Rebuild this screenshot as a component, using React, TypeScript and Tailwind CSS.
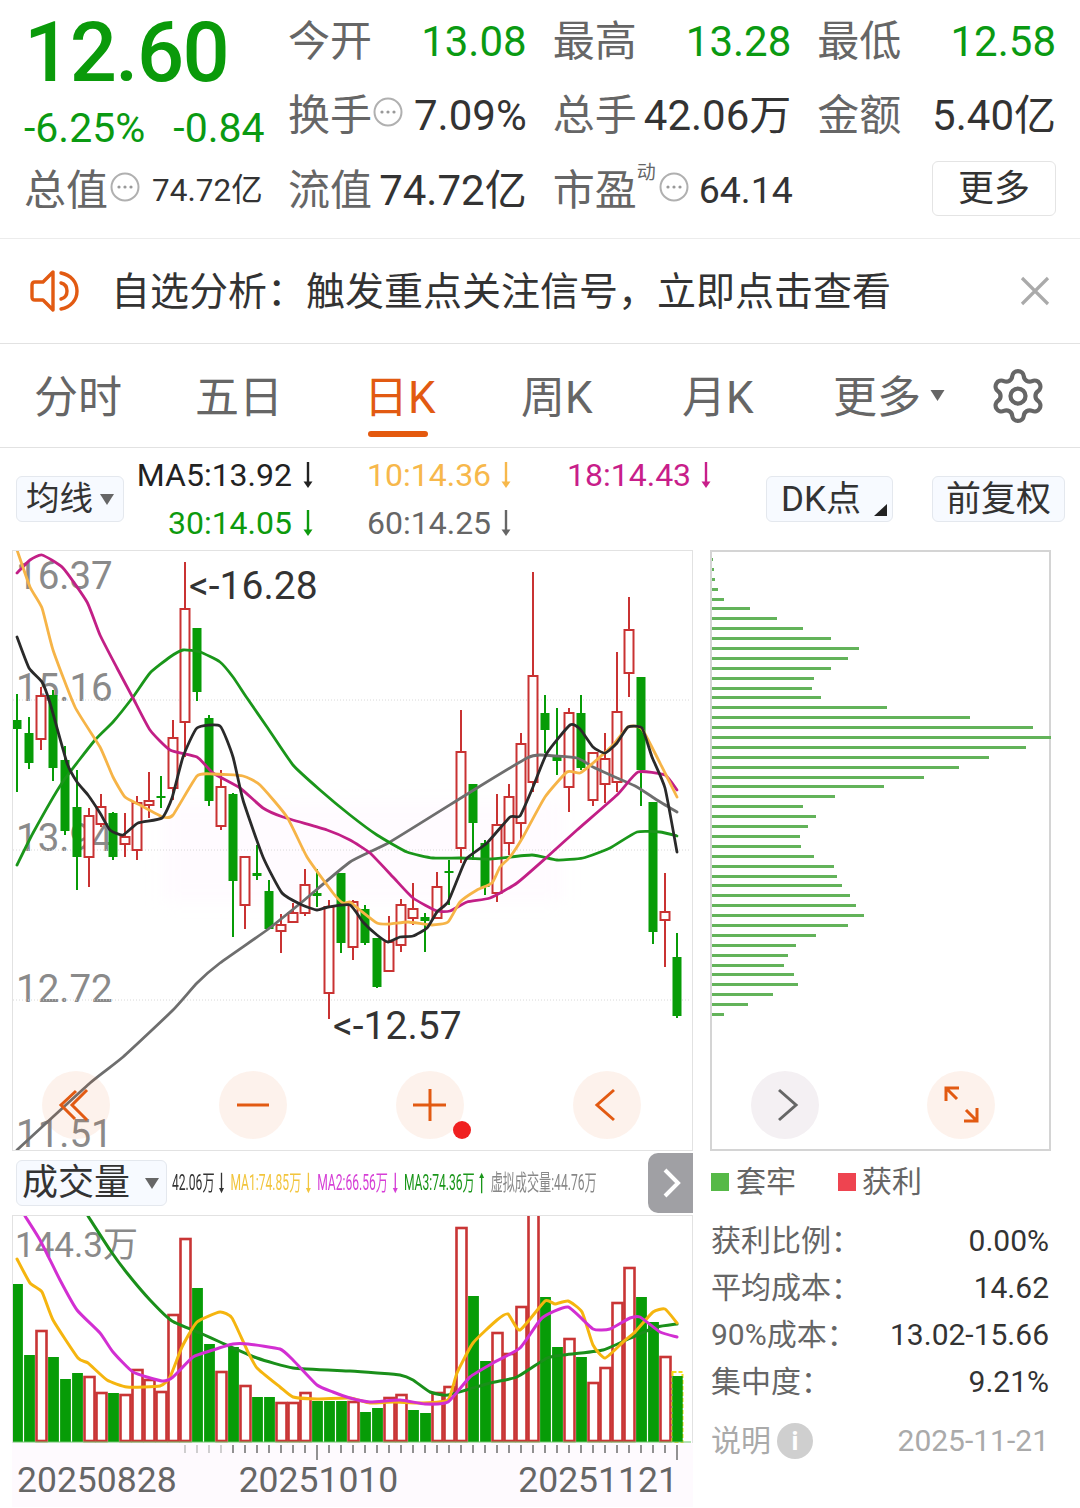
import React from 'react';
import { Settings } from 'lucide-react';

type Candle = [string, number, number, number, number];
type Pt = [number, number];

// color, high, body top, body bottom, low
const CANDLES: Candle[] = [
  ['g', 694, 720, 729, 792], ['g', 717, 733, 763, 769], ['r', 687, 696, 739, 750], ['g', 690, 695, 768, 781],
  ['g', 746, 760, 831, 835], ['g', 770, 807, 857, 890], ['r', 808, 816, 857, 887], ['r', 794, 807, 824, 827],
  ['g', 812, 813, 857, 860], ['r', 813, 837, 844, 857], ['r', 796, 803, 850, 860], ['r', 772, 801, 805, 818],
  ['g', 776, 796, 798, 808], ['r', 720, 738, 788, 800], ['r', 562, 609, 722, 757], ['g', 628, 628, 692, 701],
  ['g', 715, 718, 801, 806], ['r', 770, 787, 826, 830], ['g', 793, 794, 881, 937], ['r', 857, 857, 905, 929],
  ['g', 845, 873, 876, 880], ['g', 880, 891, 929, 929], ['r', 914, 925, 931, 953], ['r', 903, 913, 922, 922],
  ['r', 869, 885, 913, 916], ['g', 869, 893, 896, 907], ['r', 900, 907, 993, 1019], ['g', 873, 873, 943, 953],
  ['r', 900, 902, 947, 960], ['g', 905, 909, 943, 945], ['g', 938, 938, 987, 988], ['r', 916, 942, 971, 971],
  ['r', 899, 905, 945, 952], ['r', 883, 909, 918, 925], ['g', 913, 917, 921, 952], ['r', 872, 887, 918, 918],
  ['g', 860, 871, 873, 905], ['r', 710, 752, 848, 863], ['g', 784, 784, 823, 860], ['g', 840, 843, 887, 895],
  ['r', 794, 825, 893, 902], ['r', 784, 797, 843, 855], ['r', 733, 744, 823, 840], ['r', 572, 676, 782, 792],
  ['g', 695, 713, 730, 753], ['g', 708, 755, 761, 775], ['r', 708, 713, 787, 812], ['g', 695, 713, 768, 770],
  ['r', 753, 753, 800, 806], ['r', 733, 759, 784, 803], ['r', 652, 712, 782, 792], ['r', 597, 630, 673, 697],
  ['g', 677, 677, 770, 806], ['g', 802, 802, 932, 944], ['r', 873, 912, 920, 967], ['g', 933, 957, 1016, 1018],
];

const MA5: Pt[] = [[17, 637], [29, 668], [42, 682], [50, 703], [67, 763], [77, 782], [88, 795], [100, 813], [110, 830], [123, 835], [138, 823], [162, 818], [172, 798], [183, 757], [197, 728], [220, 726], [233, 757], [243, 800], [263, 857], [282, 893], [302, 905], [317, 910], [328, 907], [350, 905], [363, 922], [377, 935], [388, 942], [400, 937], [413, 936], [427, 928], [437, 912], [448, 902], [460, 873], [467, 858], [487, 843], [510, 817], [520, 816], [533, 787], [547, 753], [570, 725], [580, 729], [593, 747], [605, 753], [617, 743], [628, 727], [642, 728], [652, 757], [665, 788], [677, 852]];
const MA10: Pt[] = [[17, 550], [30, 587], [42, 608], [53, 650], [75, 707], [100, 747], [113, 777], [125, 797], [140, 805], [163, 817], [173, 815], [197, 776], [213, 774], [243, 776], [260, 785], [287, 817], [307, 857], [333, 893], [343, 903], [350, 902], [360, 910], [377, 923], [390, 924], [408, 922], [432, 925], [448, 922], [460, 902], [477, 890], [492, 883], [500, 867], [510, 857], [523, 837], [545, 797], [567, 772], [580, 773], [593, 763], [613, 745], [628, 727], [642, 729], [665, 773], [677, 797]];
const MA18: Pt[] = [[17, 573], [30, 560], [42, 555], [63, 568], [87, 602], [100, 635], [117, 668], [133, 698], [150, 730], [170, 750], [197, 757], [213, 773], [240, 788], [263, 808], [283, 817], [327, 830], [350, 840], [370, 853], [393, 877], [413, 898], [437, 911], [450, 911], [467, 902], [490, 898], [517, 883], [547, 857], [577, 830], [617, 795], [638, 772], [665, 775], [677, 790]];
const MA30: Pt[] = [[17, 865], [33, 833], [62, 783], [95, 740], [113, 722], [133, 697], [150, 673], [170, 657], [183, 650], [200, 652], [220, 662], [233, 677], [247, 698], [267, 727], [293, 765], [320, 790], [350, 815], [377, 835], [407, 852], [433, 858], [460, 858], [490, 859], [532, 855], [557, 860], [583, 858], [610, 848], [637, 832], [660, 832], [677, 836]];
const MA60: Pt[] = [[17, 1150], [90, 1083], [123, 1057], [173, 1010], [197, 983], [220, 963], [267, 930], [302, 902], [350, 862], [390, 842], [477, 788], [527, 758], [540, 755], [577, 758], [593, 767], [617, 778], [637, 787], [657, 800], [677, 812]];

const VOLUME: [string, number][] = [
  ['g', 1284], ['g', 1355], ['r', 1331], ['g', 1357], ['g', 1379], ['g', 1373], ['r', 1377], ['r', 1393], ['g', 1393], ['r', 1395],
  ['r', 1370], ['r', 1380], ['r', 1392], ['r', 1315], ['r', 1239], ['g', 1288], ['g', 1344], ['r', 1372], ['g', 1347], ['r', 1386],
  ['g', 1397], ['g', 1397], ['r', 1403], ['r', 1403], ['r', 1393], ['g', 1401], ['g', 1401], ['g', 1401], ['r', 1402], ['g', 1412],
  ['g', 1408], ['r', 1398], ['r', 1395], ['g', 1410], ['g', 1413], ['r', 1393], ['r', 1387], ['r', 1228], ['g', 1296], ['g', 1361],
  ['r', 1333], ['r', 1354], ['r', 1307], ['r', 1205], ['g', 1297], ['g', 1347], ['r', 1339], ['g', 1357], ['r', 1383], ['r', 1368],
  ['r', 1303], ['r', 1268], ['g', 1297], ['g', 1322], ['r', 1357], ['g', 1376],
];

const VOL1: Pt[] = [[17, 1259], [30, 1283], [42, 1292], [53, 1320], [78, 1358], [88, 1363], [107, 1380], [127, 1387], [160, 1386], [170, 1377], [182, 1347], [197, 1322], [220, 1312], [232, 1318], [247, 1350], [257, 1368], [280, 1387], [293, 1397], [317, 1399], [350, 1398], [370, 1403], [393, 1402], [422, 1403], [448, 1400], [457, 1373], [473, 1343], [497, 1320], [508, 1314], [520, 1330], [545, 1301], [555, 1304], [568, 1301], [582, 1312], [593, 1345], [605, 1358], [623, 1342], [635, 1332], [653, 1312], [665, 1309], [677, 1323]];
const VOL2: Pt[] = [[25, 1216], [40, 1240], [60, 1280], [77, 1310], [100, 1333], [113, 1352], [133, 1372], [162, 1381], [173, 1377], [193, 1357], [213, 1350], [233, 1344], [248, 1344], [280, 1349], [293, 1360], [317, 1385], [333, 1392], [350, 1398], [370, 1402], [400, 1400], [425, 1404], [448, 1402], [470, 1377], [493, 1363], [520, 1348], [542, 1318], [568, 1307], [593, 1329], [610, 1329], [630, 1318], [640, 1317], [660, 1332], [677, 1337]];
const VOL3: Pt[] = [[88, 1216], [110, 1250], [127, 1273], [150, 1300], [172, 1321], [200, 1333], [220, 1342], [257, 1358], [293, 1368], [350, 1371], [377, 1373], [400, 1375], [413, 1380], [430, 1392], [448, 1395], [490, 1383], [517, 1377], [547, 1358], [563, 1355], [603, 1350], [637, 1335], [657, 1327], [677, 1324]];

const PROFILE = [1, 2, 3, 6, 12, 38, 65, 91, 119, 147, 136, 119, 102, 100, 109, 175, 258, 321, 339, 314, 277, 247, 212, 172, 123, 91, 104, 96, 88, 89, 102, 122, 125, 130, 138, 144, 152, 136, 104, 84, 76, 72, 82, 86, 61, 36, 12];

const TABS = [
  { label: '分时', width: 'w-[161px]' },
  { label: '五日', width: 'w-[169px]' },
  { label: '日K', width: 'w-[157px]', active: true },
  { label: '周K', width: 'w-[161px]' },
  { label: '月K', width: 'w-[151px]' },
];

const COST_ROWS = [
  ['获利比例：', '0.00%'],
  ['平均成本：', '14.62'],
  ['90%成本：', '13.02-15.66'],
  ['集中度：', '9.21%'],
];

// rounded line through the points, low tension so flat stretches stay flat
const toPath = (pts: Pt[]) => {
  let d = `M${pts[0][0]} ${pts[0][1]}`;
  for (let i = 0; i < pts.length - 1; i++) {
    const p0 = pts[i - 1] ?? pts[i];
    const p1 = pts[i];
    const p2 = pts[i + 1];
    const p3 = pts[i + 2] ?? p2;
    const c1x = p1[0] + (p2[0] - p0[0]) / 12;
    const c1y = p1[1] + (p2[1] - p0[1]) / 12;
    const c2x = p2[0] - (p3[0] - p1[0]) / 12;
    const c2y = p2[1] - (p3[1] - p1[1]) / 12;
    d += `C${c1x} ${c1y} ${c2x} ${c2y} ${p2[0]} ${p2[1]}`;
  }
  return d;
};

const Dots: React.FC = () => (
  <svg width="30" height="30" viewBox="0 0 30 30" className="mb-[8px] shrink-0">
    <circle cx="15" cy="15" r="13.5" fill="none" stroke="#b0b0b0" strokeWidth="2" />
    <circle cx="9" cy="15" r="1.6" fill="#999" />
    <circle cx="15" cy="15" r="1.6" fill="#999" />
    <circle cx="21" cy="15" r="1.6" fill="#999" />
  </svg>
);

const Arrow: React.FC<{ color: string; up?: boolean; small?: boolean }> = ({ color, up, small }) => (
  <svg
    width="14"
    height={small ? 22 : 28}
    viewBox="0 0 14 28"
    preserveAspectRatio="none"
    className={`shrink-0 ${up ? 'rotate-180' : ''}`}
  >
    <path d="M7 1V24" stroke={color} strokeWidth="2.4" fill="none" />
    <path d="M2.5 20.5H11.5L7 27Z" fill={color} />
  </svg>
);

const Triangle: React.FC<{ className: string }> = ({ className }) => (
  <svg viewBox="0 0 14 11" className={className}>
    <path d="M0 0H14L7 11Z" fill="#666" />
  </svg>
);

const RoundButton: React.FC<{ tone?: string; children: React.ReactNode }> = ({ tone, children }) => (
  <div className={`flex h-[68px] w-[68px] items-center justify-center rounded-full ${tone ?? 'bg-[#e25a12]/[0.08]'}`}>
    <svg width="68" height="68" viewBox="0 0 68 68" fill="none" strokeWidth="3" stroke="#e25a12">
      {children}
    </svg>
  </div>
);

const Stat: React.FC<{ label: string; value: string; green?: boolean; dots?: boolean }> = ({ label, value, green, dots }) => (
  <div className="flex items-center justify-between">
    <div className="flex items-center gap-[1px]">
      <span className="text-[#666]">{label}</span>
      {dots && <Dots />}
    </div>
    <span className={green ? 'text-[#0a9a12]' : 'text-[#333]'}>{value}</span>
  </div>
);

const PriceChart: React.FC = () => (
  <div className="relative h-[601px] border border-[#e2e2e2]">
    {/* faint watermark behind the candles */}
    <div className="absolute left-[150px] top-[250px] h-[100px] w-[400px] bg-[#fffbff] blur-sm" />
    <span className="absolute left-[3px] top-[3px] text-[38.5px] leading-[44px] text-[#8a8a8a]">16.37</span>
    <span className="absolute left-[3px] top-[115px] text-[38.5px] leading-[44px] text-[#8a8a8a]">15.16</span>
    <span className="absolute left-[3px] top-[265px] text-[38.5px] leading-[44px] text-[#8a8a8a]">13.94</span>
    <span className="absolute left-[3px] top-[416px] text-[38.5px] leading-[44px] text-[#8a8a8a]">12.72</span>
    <span className="absolute left-[3px] top-[561px] text-[38.5px] leading-[44px] text-[#8a8a8a]">11.51</span>
    <svg viewBox="13 551 678 599" className="relative z-10 block h-[599px] w-[678px]">
      {[700, 850, 1000].map((y) => (
        <line key={y} x1="13" x2="691" y1={y} y2={y} stroke="#d8d8d8" strokeWidth="1" strokeDasharray="1 2" />
      ))}
      {CANDLES.map(([color, high, top, bottom, low], i) => {
        const x = 17 + 12 * i;
        const stroke = color === 'g' ? '#079c07' : '#c93232';
        return (
          <g key={i}>
            <line x1={x} x2={x} y1={high} y2={low} stroke={stroke} strokeWidth="2" />
            {color === 'g' ? (
              <rect x={x - 4.5} y={top} width="9" height={bottom - top} fill={stroke} />
            ) : (
              <rect x={x - 4.5} y={top} width="9" height={bottom - top} fill="#fff" stroke={stroke} strokeWidth="2" />
            )}
          </g>
        );
      })}
      <g fill="none" strokeWidth="2.8" strokeLinejoin="round" strokeLinecap="round">
        <path d={toPath(MA60)} stroke="#6e6e6e" />
        <path d={toPath(MA30)} stroke="#1a961a" />
        <path d={toPath(MA18)} stroke="#c21f86" />
        <path d={toPath(MA10)} stroke="#f6b447" />
        <path d={toPath(MA5)} stroke="#2a2a2a" />
      </g>
    </svg>
    <span className="absolute left-[176px] top-[13px] z-10 text-[39px] leading-[44px] text-[#333]">{'<-16.28'}</span>
    <span className="absolute left-[320px] top-[453px] z-10 text-[39px] leading-[44px] text-[#333]">{'<-12.57'}</span>
    <div className="absolute left-[29px] top-[520px] z-20 flex gap-[109px]">
      <RoundButton>
        <path d="M34 20L19 34L33 48M45 19L30 34L45 49" />
      </RoundButton>
      <RoundButton>
        <path d="M18 34H50" />
      </RoundButton>
      <div className="relative">
        <RoundButton>
          <path d="M17 34H50M34 18V50" />
        </RoundButton>
        <div className="absolute left-[57px] top-[50px] h-[18px] w-[18px] rounded-full bg-[#f02020]" />
      </div>
      <RoundButton>
        <path d="M41 19L24 34L41 49" />
      </RoundButton>
    </div>
  </div>
);

const VolumeChart: React.FC = () => (
  <div className="relative h-[228px] border-x border-t border-[#e2e2e2]">
    <span className="absolute left-[2px] top-[8px] text-[35px] leading-[44px] text-[#8a8a8a]">144.3万</span>
    <svg viewBox="13 1216 678 227" className="relative z-10 block h-[227px] w-[678px]">
      {VOLUME.map(([color, top], i) => {
        const x = 17.5 + 12 * i;
        if (i === 55) {
          return (
            <g key={i}>
              <rect x={x - 5} y={1372} width="10" height="70" fill="none" stroke="#f2dc1a" strokeWidth="2" strokeDasharray="4 2" />
              <rect x={x - 5.2} y={top} width="10.4" height={1442 - top} fill="#079c07" />
            </g>
          );
        }
        return color === 'g' ? (
          <rect key={i} x={x - 5.4} y={top} width="10.8" height={1442 - top} fill="#079c07" />
        ) : (
          <rect key={i} x={x - 5} y={top} width="10" height={1441 - top} fill="#fff" stroke="#c93535" strokeWidth="2.6" />
        );
      })}
      <line x1="13" x2="691" y1="1442" y2="1442" stroke="#6cc46c" strokeWidth="1" />
      <g fill="none" strokeWidth="3" strokeLinejoin="round" strokeLinecap="round">
        <path d={toPath(VOL3)} stroke="#1a8f1a" />
        <path d={toPath(VOL1)} stroke="#f5b50f" />
        <path d={toPath(VOL2)} stroke="#d22fd2" />
      </g>
    </svg>
  </div>
);

export default function App() {
  return (
    <div className="h-[1508px] w-[1080px] overflow-hidden bg-white font-['Roboto','Noto_Sans_CJK_SC',sans-serif]">
      {/* quote header */}
      <div className="flex h-[239px] border-b border-[#ececec]">
        <div className="w-[288px] shrink-0 pl-[24px]">
          <div className="h-[98px] text-[83px] font-medium leading-[106px] tracking-[-1.5px] text-[#0a9a0a]">12.60</div>
          <div className="flex h-[60px] items-center gap-[28px] text-[41px] leading-none text-[#0a9a12]">
            <span>-6.25%</span>
            <span>-0.84</span>
          </div>
          <div className="flex h-[66px] items-center">
            <span className="text-[42px] leading-none text-[#666]">总值</span>
            <span className="ml-[2px] flex">
              <Dots />
            </span>
            <span className="ml-[12px] text-[31.5px] leading-none text-[#333]">74.72亿</span>
          </div>
        </div>
        <div className="w-[768px]">
          <div className="grid h-[228px] grid-cols-3 grid-rows-3 gap-x-[26px] pt-[5px] text-[42px] leading-none">
            <Stat label="今开" value="13.08" green />
            <Stat label="最高" value="13.28" green />
            <Stat label="最低" value="12.58" green />
            <Stat label="换手" value="7.09%" dots />
            <Stat label="总手" value="42.06万" />
            <Stat label="金额" value="5.40亿" />
            <Stat label="流值" value="74.72亿" />
            <div className="flex items-center whitespace-nowrap">
              <span className="shrink-0 text-[#666]">市盈</span>
              <span className="mb-[36px] shrink-0 text-[19px] text-[#666]">动</span>
              <span className="ml-[3px] flex">
                <Dots />
              </span>
              <span className="ml-[10px] text-[37.5px] text-[#333]">64.14</span>
            </div>
            <div className="flex items-center justify-end">
              <div className="mb-[4px] flex h-[55px] w-[124px] items-center justify-center rounded-[6px] border border-[#e4e4e4] text-[36px] text-[#333]">
                更多
              </div>
            </div>
          </div>
        </div>
      </div>

      {/* notice */}
      <div className="flex h-[105px] items-center border-b border-[#e2e2e2] pl-[30px]">
        <svg width="50" height="44" viewBox="0 0 50 44" fill="none" stroke="#e25a12" strokeWidth="3.4" strokeLinejoin="round" strokeLinecap="round">
          <path d="M5 13H13L23 3V41L13 31H5C3 31 2 30 2 28V16C2 14 3 13 5 13Z" />
          <path d="M31 4C41 6 47 13 47 22C47 31 41 38 31 40" />
          <path d="M31 14C35 15 37 18 37 22C37 26 35 29 31 30" />
        </svg>
        <span className="ml-[31px] mt-[3px] text-[39px] leading-none text-[#333]">自选分析：触发重点关注信号，立即点击查看</span>
        <svg width="30" height="30" viewBox="0 0 30 30" className="ml-auto mr-[30px]" stroke="#aaa" strokeWidth="3.2">
          <path d="M2 2L28 28M28 2L2 28" />
        </svg>
      </div>

      {/* period tabs */}
      <div className="flex h-[104px] items-center border-b border-[#e2e2e2] pl-[34px] pt-[5px] text-[44px] leading-none text-[#666]">
        {TABS.map((tab) => (
          <div key={tab.label} className={`relative shrink-0 ${tab.width} ${tab.active ? 'text-[#e25a12]' : ''}`}>
            {tab.label}
            {tab.active && <div className="absolute left-[4px] top-[55px] h-[6px] w-[60px] rounded-full bg-[#e4590e]" />}
          </div>
        ))}
        <div className="flex items-center gap-[9px]">
          <span>更多</span>
          <Triangle className="mt-[-6px] h-[11px] w-[15px]" />
        </div>
        <Settings size={60} strokeWidth={1.7} color="#666" className="ml-[43px] mt-[-4px]" />
      </div>

      {/* moving average legend */}
      <div className="flex h-[102px] items-center pl-[16px]">
        <div className="flex h-[46px] w-[108px] items-center justify-center gap-[7px] rounded-[6px] border border-[#e4e8ee] bg-[#f7faff] text-[33.5px] leading-none text-[#333]">
          <span>均线</span>
          <Triangle className="h-[11px] w-[14px]" />
        </div>
        <div className="ml-[13px] grid grid-cols-[178px_148px_145px] grid-rows-[48px_48px] gap-x-[52px] text-[32px] leading-none">
          <div className="flex items-center justify-end gap-[9px] text-[#222]">
            MA5:13.92
            <Arrow color="#222" />
          </div>
          <div className="flex items-center gap-[8px] text-[#f7b84b]">
            10:14.36
            <Arrow color="#f7b84b" />
          </div>
          <div className="flex items-center gap-[8px] text-[#c81e8a]">
            18:14.43
            <Arrow color="#c81e8a" />
          </div>
          <div className="flex items-center justify-end gap-[9px] text-[#0d9a0d]">
            30:14.05
            <Arrow color="#0d9a0d" />
          </div>
          <div className="flex items-center gap-[8px] text-[#666]">
            60:14.25
            <Arrow color="#666" />
          </div>
        </div>
        <div className="relative ml-[54px] flex h-[46px] w-[127px] items-center rounded-[6px] border border-[#e4e8ee] bg-[#f7faff] pl-[14px] text-[35px] leading-none text-[#333]">
          DK点
          <svg width="13" height="12" viewBox="0 0 13 12" className="absolute bottom-[5px] right-[5px]">
            <path d="M13 0V12H0Z" fill="#222" />
          </svg>
        </div>
        <div className="ml-[39px] flex h-[46px] w-[133px] items-center justify-center rounded-[6px] border border-[#e4e8ee] bg-[#f7faff] text-[35px] leading-none text-[#333]">
          前复权
        </div>
      </div>

      {/* charts */}
      <div className="flex pl-[12px]">
        <div className="w-[681px] shrink-0">
          <PriceChart />
          <div className="flex h-[64px] items-center">
            <div className="ml-[4px] flex h-[46px] w-[151px] shrink-0 items-center rounded-[6px] border border-[#e4e8ee] bg-[#f7faff] pl-[5px] text-[36px] leading-none text-[#333]">
              <span>成交量</span>
              <Triangle className="ml-[15px] h-[11px] w-[14px]" />
            </div>
            <div className="ml-[5px] w-[425px]">
              <div className="flex w-max origin-left scale-x-[0.55] items-center gap-[6px] whitespace-nowrap text-[22px] leading-none">
                <span className="text-[#333]">42.06万</span>
                <Arrow color="#333" small />
                <span className="ml-[3px] text-[#f2c53d]">MA1:74.85万</span>
                <Arrow color="#f2c53d" small />
                <span className="ml-[3px] text-[#d63fd6]">MA2:66.56万</span>
                <Arrow color="#d63fd6" small />
                <span className="ml-[3px] text-[#1a961a]">MA3:74.36万</span>
                <Arrow color="#1a961a" up small />
                <span className="ml-[3px] text-[#888]">虚拟成交量:44.76万</span>
              </div>
            </div>
            <div className="ml-auto flex h-[60px] w-[45px] items-center justify-center rounded-l-[10px] bg-[#a0a0a4]">
              <svg width="22" height="32" viewBox="0 0 22 32" fill="none" stroke="#fff" strokeWidth="4">
                <path d="M5 3L18 16L5 29" />
              </svg>
            </div>
          </div>
          <VolumeChart />
          <div className="relative h-[64px] bg-[#fefafe] pl-[5px] pt-[15px] text-[35.5px] leading-[44px] text-[#666]">
            <svg viewBox="12 1443 680 20" className="absolute left-0 top-0 h-[20px] w-[680px]">
              {CANDLES.map((_, i) =>
                i >= 14 ? (
                  <line
                    key={i}
                    x1={17 + 12 * i}
                    x2={17 + 12 * i}
                    y1="1445"
                    y2={i === 25 || i === 55 ? 1460 : 1453}
                    stroke={i < 18 ? '#c4c4c4' : '#777'}
                    strokeWidth="1.6"
                  />
                ) : null
              )}
            </svg>
            <div className="flex">
              <span>20250828</span>
              <span className="ml-[62px]">20251010</span>
              <span className="ml-[120px]">20251121</span>
            </div>
          </div>
        </div>

        <div className="ml-[17px] w-[341px] shrink-0">
          <div className="relative h-[601px] border-2 border-[#d4d4d4] pt-[6px]">
            <div className="flex flex-col gap-[6.9px]">
              {PROFILE.map((width, i) => (
                <div key={i} className="h-[3px] bg-[#63b35a]" style={{ width }} />
              ))}
            </div>
            <div className="absolute left-[39px] top-[519px] flex gap-[108px]">
              <RoundButton tone="bg-[#f4f0f3]">
                <path d="M28 19L45 34L28 49" stroke="#666" />
              </RoundButton>
              <RoundButton>
                <path d="M19 30V17H32M19 17L30 28M50 37V50H37M50 50L39 39" />
              </RoundButton>
            </div>
          </div>
          <div className="flex h-[66px] items-center pb-[4px] pl-[1px] text-[30px] leading-none text-[#666]">
            <div className="h-[18px] w-[18px] bg-[#56b947]" />
            <span className="ml-[7px]">套牢</span>
            <div className="ml-[42px] h-[18px] w-[18px] bg-[#ee4450]" />
            <span className="ml-[6px]">获利</span>
          </div>
          <div className="flex flex-col pl-[1px] pr-[2px] text-[30px] leading-none">
            {COST_ROWS.map(([label, value]) => (
              <div key={label} className="flex h-[47px] items-center justify-between">
                <span className="text-[#666]">{label}</span>
                <span className="text-[#333]">{value}</span>
              </div>
            ))}
            <div className="flex h-[72px] items-center text-[#aaa]">
              <span>说明</span>
              <div className="ml-[6px] flex h-[36px] w-[36px] items-center justify-center rounded-full bg-[#cfcfcf] text-[26px] font-bold text-white">
                i
              </div>
              <span className="ml-auto">2025-11-21</span>
            </div>
          </div>
        </div>
      </div>
    </div>
  );
}
